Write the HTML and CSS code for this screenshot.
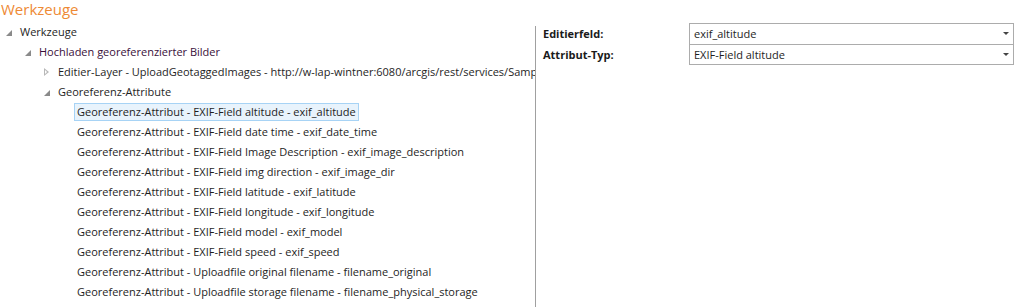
FILE: index.html
```html
<!DOCTYPE html>
<html lang="de">
<head>
  <meta charset="UTF-8">
  <title>Werkzeuge</title>
  <link rel="stylesheet" href="styles.css">
</head>
<body>
  <div class="page">
    <h1 class="title">Werkzeuge</h1>
    <div class="main">
      <div class="tree">
        <div class="node lvl1"><span class="tri open"></span><span class="label">Werkzeuge</span></div>
        <div class="node lvl2"><span class="tri open"></span><span class="label tool">Hochladen georeferenzierter Bilder</span></div>
        <div class="node lvl3"><span class="tri closed"></span><span class="label">Editier-Layer - UploadGeotaggedImages - http://w-lap-wintner:6080/arcgis/rest/services/SampleWorldCities/FeatureServer/0</span></div>
        <div class="node lvl3"><span class="tri open"></span><span class="label">Georeferenz-Attribute</span></div>
        <div class="node lvl4"><span class="label selected">Georeferenz-Attribut - EXIF-Field altitude - exif_altitude</span></div>
        <div class="node lvl4"><span class="label">Georeferenz-Attribut - EXIF-Field date time - exif_date_time</span></div>
        <div class="node lvl4"><span class="label">Georeferenz-Attribut - EXIF-Field Image Description - exif_image_description</span></div>
        <div class="node lvl4"><span class="label">Georeferenz-Attribut - EXIF-Field img direction - exif_image_dir</span></div>
        <div class="node lvl4"><span class="label">Georeferenz-Attribut - EXIF-Field latitude - exif_latitude</span></div>
        <div class="node lvl4"><span class="label">Georeferenz-Attribut - EXIF-Field longitude - exif_longitude</span></div>
        <div class="node lvl4"><span class="label">Georeferenz-Attribut - EXIF-Field model - exif_model</span></div>
        <div class="node lvl4"><span class="label">Georeferenz-Attribut - EXIF-Field speed - exif_speed</span></div>
        <div class="node lvl4"><span class="label">Georeferenz-Attribut - Uploadfile original filename - filename_original</span></div>
        <div class="node lvl4"><span class="label">Georeferenz-Attribut - Uploadfile storage filename - filename_physical_storage</span></div>
      </div>
      <div class="props">
        <div class="prop">
          <span class="prop-name">Editierfeld:</span>
          <div class="combo"><span>exif_altitude</span><span class="arrow"></span></div>
        </div>
        <div class="prop">
          <span class="prop-name">Attribut-Typ:</span>
          <div class="combo second"><span>EXIF-Field altitude</span><span class="arrow"></span></div>
        </div>
      </div>
    </div>
  </div>
</body>
</html>
```
FILE: styles.css
```css
body {
  margin: 0;
  background-color: #fff;
  font-family: "Open Sans", "Noto Sans", sans-serif;
  font-size: 11px;
  color: #1e1e1e;
  overflow: hidden;
}
.page {
  width: 1016px;
  height: 307px;
}
.title {
  margin: 0;
  padding-left: 1px;
  height: 20px;
  line-height: 19px;
  font-size: 15px;
  font-weight: normal;
  color: #ee8a35;
}
.main {
  display: flex;
  height: 287px;
}
.tree {
  width: 535px;
  padding-top: 2px;
  overflow: hidden;
}
.node {
  display: flex;
  align-items: center;
  height: 20px;
  white-space: nowrap;
}
.lvl1 { padding-left: 4px; }
.lvl2 { padding-left: 23px; }
.lvl3 { padding-left: 42px; }
.lvl4 { padding-left: 77px; }
.tri {
  width: 9px;
  height: 9px;
  margin-right: 7px;
  flex: none;
  position: relative;
}
.tri.open::before {
  content: "";
  position: absolute;
  right: 1px;
  bottom: 1px;
  border-style: solid;
  border-width: 0 0 6px 6px;
  border-color: transparent transparent #8a8a8a transparent;
}
.tri.closed::before {
  content: "";
  position: absolute;
  left: 2px;
  top: 0;
  border-style: solid;
  border-width: 4.5px 0 4.5px 5px;
  border-color: transparent transparent transparent #b8b8b8;
}
.tri.closed::after {
  content: "";
  position: absolute;
  left: 3px;
  top: 2px;
  border-style: solid;
  border-width: 2.5px 0 2.5px 2.5px;
  border-color: transparent transparent transparent #fff;
}
.label {
  line-height: 16px;
}
.tool {
  color: #3a0f3a;
}
.selected {
  background-color: #e8f3fc;
  border: 1px solid #a7d3f5;
  padding: 0 2px;
  margin-left: -3px;
}
.props {
  flex: 1;
  border-left: 1px solid #a0a0a0;
  margin-top: 6px;
  padding: 0 2px 0 7px;
}
.prop {
  display: flex;
  align-items: center;
  height: 21px;
}
.prop:first-child {
  margin-top: -3px;
}
.prop-name {
  width: 146px;
  font-weight: bold;
  color: #1a1a1a;
}
.combo {
  flex: 1;
  height: 20px;
  border: 1px solid #acacac;
  display: flex;
  align-items: center;
  justify-content: space-between;
  padding: 0 4px;
}
.combo.second {
  border-top: none;
  height: 20px;
}
.arrow {
  width: 0;
  height: 0;
  border-style: solid;
  border-width: 3px 3px 0 3px;
  border-color: #444 transparent transparent transparent;
}
```
